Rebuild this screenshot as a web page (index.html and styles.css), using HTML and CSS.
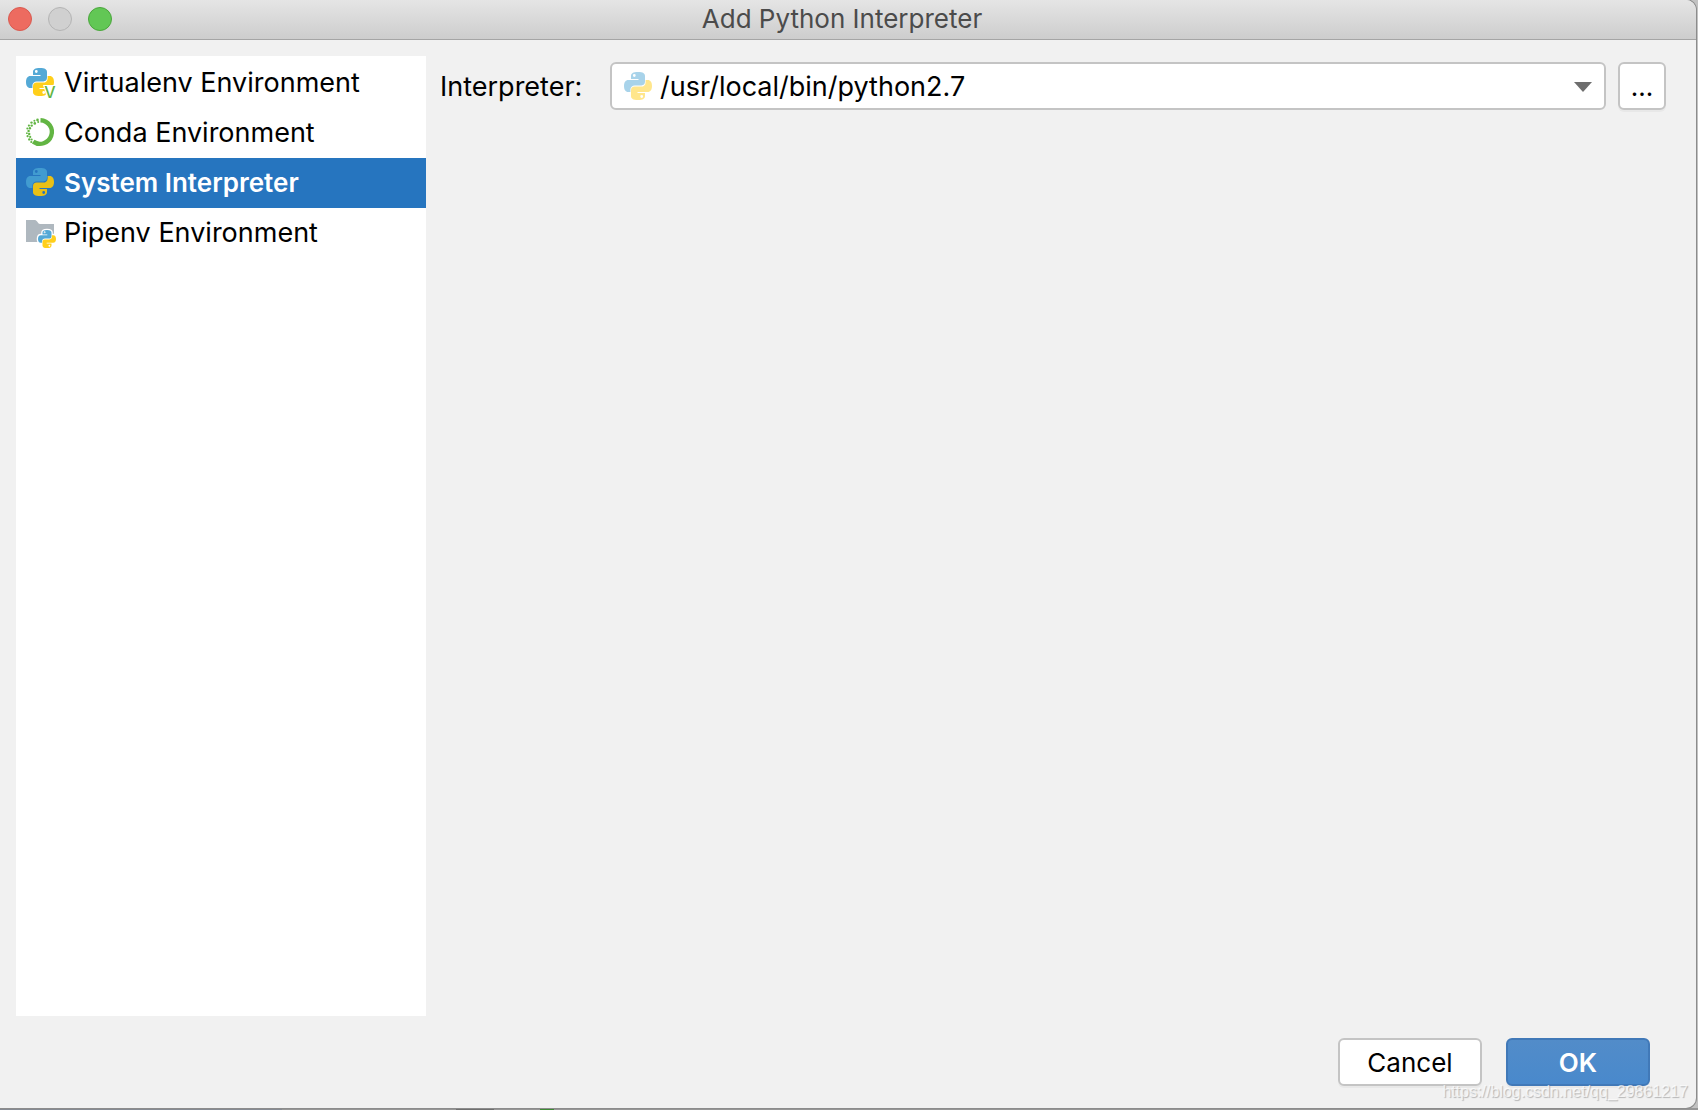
FILE: index.html
```html
<!DOCTYPE html>
<html lang="en">
<head>
  <title>Add Python Interpreter</title>
  <meta charset="UTF-8">
  <link rel="stylesheet" href="styles.css">
</head>
<body>
<svg class="defs" aria-hidden="true">
  <defs>
    <path id="snake" fill-rule="evenodd" d="M14 0C9 0 7 1.5 7 4V7H14.5V8H4.5C1.4 8 0 10.6 0 14C0 17.6 1.4 20 4.3 20H6.4V17.6C6.4 15 8.3 13.4 10.8 13.4H17.4C19.6 13.4 21 12 21 9.8V4C21 1.5 19 0 14 0ZM10.3 2.1A1.4 1.4 0 1 1 10.3 4.9A1.4 1.4 0 1 1 10.3 2.1Z"/>
    <g id="python">
      <use href="#snake" class="blue"/>
      <use href="#snake" class="yellow" transform="rotate(180 14 14)"/>
    </g>
  </defs>
</svg>

<main class="window">
  <header class="titlebar">
    <div class="lights">
      <button class="light close" aria-label="Close"></button>
      <button class="light minimize" aria-label="Minimize" disabled></button>
      <button class="light zoom" aria-label="Zoom"></button>
    </div>
    <h1>Add Python Interpreter</h1>
  </header>

  <div class="content">
    <nav class="sidebar">
      <a href="#virtualenv">
        <svg class="icon" viewBox="0 0 30 30">
          <use href="#python"/>
          <path fill="#fff" d="M17 17H30V30H21Z"/>
          <text class="badge" x="24" y="30" text-anchor="middle">V</text>
        </svg>
        <span>Virtualenv Environment</span>
      </a>
      <a href="#conda">
        <svg class="icon" viewBox="0 0 30 30">
          <path class="ring" d="M14.5 2.2A11.8 11.8 0 1 1 7.2 23.6"/>
          <g class="dots">
            <circle cx="11.5" cy="1.9" r="1.3"/>
            <circle cx="12.2" cy="4" r="1"/>
            <circle cx="8.4" cy="2.8" r="1"/>
            <circle cx="8.8" cy="5.4" r="1.3"/>
            <circle cx="5.5" cy="4.6" r="1.2"/>
            <circle cx="5.7" cy="7.6" r="1.2"/>
            <circle cx="2.9" cy="7.6" r="1.1"/>
            <circle cx="3.9" cy="10.2" r="1.2"/>
            <circle cx="1.3" cy="10.6" r="1"/>
            <circle cx="2.6" cy="13" r="1.2"/>
            <circle cx=".9" cy="15.2" r=".9"/>
            <circle cx="3.2" cy="16" r="1.2"/>
            <circle cx="1.6" cy="18.2" r="1.1"/>
            <circle cx="4.2" cy="18.9" r="1.1"/>
            <circle cx="3.3" cy="21.4" r="1.2"/>
            <circle cx="5.7" cy="21.4" r="1"/>
            <circle cx="5.3" cy="24" r="1.1"/>
          </g>
        </svg>
        <span>Conda Environment</span>
      </a>
      <a href="#system" class="selected" aria-current="page">
        <svg class="icon" viewBox="0 0 30 30"><use href="#python"/></svg>
        <span>System Interpreter</span>
      </a>
      <a href="#pipenv">
        <svg class="icon" viewBox="0 0 30 30">
          <path fill="#afb8bf" d="M0 2H9C11 2 12 6 14 6H28V24H0Z"/>
          <g transform="translate(12 12) scale(.643)">
            <use href="#python" class="halo"/>
            <use href="#python"/>
          </g>
        </svg>
        <span>Pipenv Environment</span>
      </a>
    </nav>

    <section class="panel">
      <label for="interpreter">Interpreter:</label>
      <div class="combo">
        <svg class="icon faded" viewBox="0 0 30 30"><use href="#python"/></svg>
        <select id="interpreter">
          <option>/usr/local/bin/python2.7</option>
        </select>
        <svg class="arrow" viewBox="0 0 18 10"><path d="M0 0H18L9 10Z"/></svg>
      </div>
      <button class="btn browse" aria-label="Browse">...</button>
    </section>
  </div>

  <footer class="actions">
    <button class="btn">Cancel</button>
    <button class="btn primary">OK</button>
  </footer>
</main>
<span class="watermark">https://blog.csdn.net/qq_29861217</span>
</body>
</html>
```
FILE: styles.css
```css
* {
  box-sizing: border-box;
}

body {
  --blue: #54a9d6;
  --yellow: #ffcf1b;
  height: 100vh;
  margin: 0;
  padding: 0 2px 2px 0;
  position: relative;
  overflow: hidden;
  font: 27px/30px Inter, "Liberation Sans", sans-serif;
  color: #000;
  background:
    linear-gradient(#3f8a35, #3f8a35) 540px 100% / 14px 2px no-repeat,
    linear-gradient(to right, #868b93 282px, #969696 282px, #969696 456px, #707070 456px, #707070 494px, #969696 494px) 0 100% / 100% 2px no-repeat,
    #c2c2c2;
}

.defs {
  position: absolute;
  width: 0;
  height: 0;
}

.window {
  height: 100%;
  display: flex;
  flex-direction: column;
  background: #f1f1f1;
  border-radius: 0 10px 10px 0;
  box-shadow: 0 0 0 1px #8c8c8c;
  overflow: hidden;
}

.titlebar {
  flex: none;
  height: 40px;
  display: grid;
  grid-template-columns: 1fr auto 1fr;
  align-items: center;
  padding: 0 20px 2px 8px;
  background: linear-gradient(#e5e5e5, #cdcdcd);
  border-bottom: 1px solid #a5a5a5;
}

.titlebar h1 {
  margin: 0;
  font-size: 26px;
  font-weight: 400;
  line-height: 30px;
  color: #4b4b4b;
}

.lights {
  display: flex;
  gap: 16px;
}

.light {
  width: 24px;
  height: 24px;
  padding: 0;
  border: 1px solid #d95a50;
  border-radius: 50%;
  background: #ed6b60;
}

.light.minimize {
  border-color: #b4b4b4;
  background: #d0d0d0;
}

.light.zoom {
  border-color: #4aa63c;
  background: #62c755;
}

.content {
  flex: 1;
  display: flex;
  gap: 14px;
  padding: 16px 30px 0 16px;
}

.sidebar {
  width: 410px;
  padding-top: 2px;
  background: #fff;
}

.sidebar a {
  height: 50px;
  display: flex;
  align-items: center;
  gap: 8px;
  padding: 0 10px;
  color: #000;
  text-decoration: none;
}

.sidebar a.selected {
  --blue: #419bd0;
  --yellow: #e9c016;
  background: #2675bf;
  color: #fff;
  font-size: 26px;
  font-weight: 600;
}

.icon {
  flex: none;
  width: 30px;
  height: 30px;
  overflow: visible;
}

.blue {
  fill: var(--blue);
}

.yellow {
  fill: var(--yellow);
}

.badge {
  font: 500 16px Inter, sans-serif;
  fill: #62b543;
}

.ring {
  fill: none;
  stroke: #62b543;
  stroke-width: 4.4;
}

.dots {
  fill: #62b543;
}

.halo {
  stroke: #fff;
  stroke-width: 4;
}

.panel {
  flex: 1;
  display: flex;
  align-items: flex-start;
  padding-top: 6px;
}

.panel label {
  width: 170px;
  padding-top: 2px;
  line-height: 46px;
}

.combo {
  flex: 1;
  position: relative;
  margin-right: 12px;
}

.combo select {
  display: block;
  width: 100%;
  height: 48px;
  padding: 2px 48px 0 48px;
  appearance: none;
  border: 2px solid #c4c4c4;
  border-radius: 6px;
  background: #fff;
  color: #000;
  font: inherit;
}

/* icon and arrow lie over the native select */
.combo .icon,
.combo .arrow {
  position: absolute;
  pointer-events: none;
}

.combo .icon {
  top: 10px;
  left: 14px;
}

.combo .arrow {
  top: 20px;
  right: 14px;
  width: 18px;
  height: 10px;
  fill: #6e6e6e;
}

.faded {
  opacity: .5;
}

.btn {
  width: 144px;
  height: 48px;
  padding: 2px 0 0;
  border: 2px solid #c4c4c4;
  border-radius: 6px;
  background: #fff;
  box-shadow: 0 2px 0 #e8e8e8;
  color: #000;
  font: inherit;
  font-size: 26px;
}

.btn.browse {
  width: 48px;
}

.btn.primary {
  border-color: #4179b8;
  background: linear-gradient(#528cc9, #4989cc);
  color: #fff;
  font-weight: 600;
}

.actions {
  flex: none;
  display: flex;
  justify-content: flex-end;
  gap: 24px;
  padding: 22px 46px;
}

.watermark {
  position: absolute;
  right: 10px;
  bottom: 8px;
  font: 16px/20px "Liberation Sans", sans-serif;
  color: rgba(255, 255, 255, .7);
  text-shadow: 1px 1px 1px rgba(0, 0, 0, .25);
}
```
